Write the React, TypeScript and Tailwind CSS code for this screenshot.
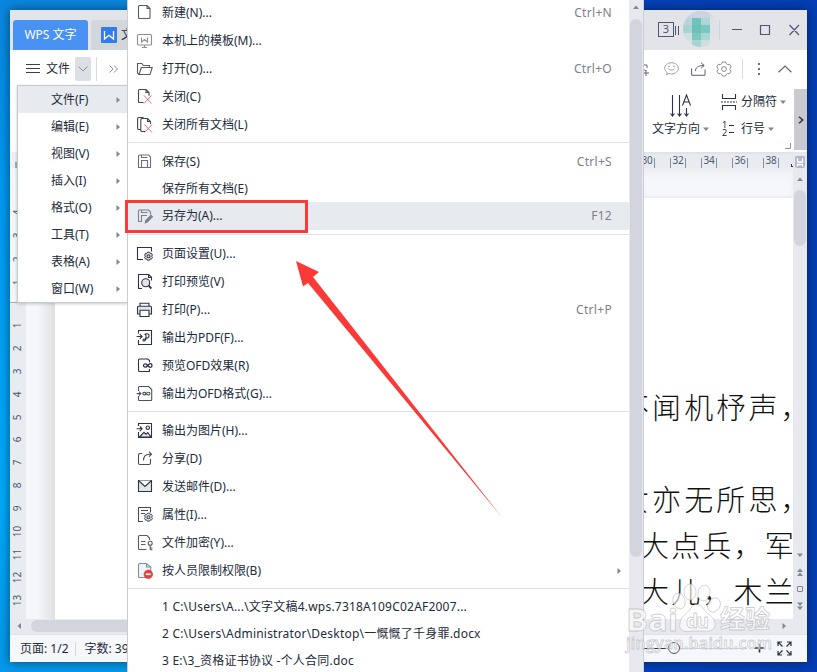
import type { ReactNode } from "react";

type MenuRow = {
  label: string;
  icon?: ReactNode;
  shortcut?: string;
  active?: boolean;
  submenu?: boolean;
  height?: string;
};

const INK = "#2b3444";

function Glyph({ children, color = INK }: { children: ReactNode; color?: string }) {
  return (
    <svg width="18" height="18" viewBox="0 0 18 18" fill="none" stroke={color} strokeWidth="1.1" className="shrink-0">
      {children}
    </svg>
  );
}

const gearSmall = (
  <>
    <path d="M11.5 7.2h2l.6 1.2 1.3-.1 1 1.7-.8 1.2.8 1.2-1 1.700-1.300-.1-.6 1.200h-2l-.6-1.200-1.300.1-1-1.700.8-1.200-.8-1.200 1-1.700 1.300.1z" fill="#e3e5e9" strokeWidth="1" />
    <circle cx="12.5" cy="11.2" r="1.500" />
  </>
);

const pageOutline = "M10.5 1.5h-7a1 1 0 0 0-1 1v12a1 1 0 0 0 1 1h10.2a1 1 0 0 0 1-1V5z";

const groups: MenuRow[][] = [
  [
    {
      label: "新建(N)...",
      shortcut: "Ctrl+N",
      icon: <Glyph color="#555b68"><path d="M11 1.500H3.500a1 1 0 0 0-1 1v11a1 1 0 0 0 1 1h9.500a1 1 0 0 0 1-1V4.500zM11 1.500v3h3" /></Glyph>,
    },
    {
      label: "本机上的模板(M)...",
      icon: (
        <Glyph color="#8b8f98">
          <rect x="1.5" y="2.5" width="14" height="10.5" rx="1" />
          <path d="M5.500 5.500v4.600l3-2.700 3 2.700V5.500M6 15.500h5M8.500 13v2.500" />
        </Glyph>
      ),
    },
    {
      label: "打开(O)...",
      shortcut: "Ctrl+O",
      icon: <Glyph color="#555b68"><path d="M3 14.500L1.500 13V3.500h4.300l1.600 2h6.100v2M3 14.500l2.300-7h10.900l-2.200 7z" /></Glyph>,
    },
    {
      label: "关闭(C)",
      icon: (
        <Glyph color="#3f4655">
          <path d="M7.500 14.500h-4a1 1 0 0 1-1-1V2.500a1 1 0 0 1 1-1h6.500l3 3v3.200M10 1.500v3h3" />
          <path d="M8 7.500l7.500 8M15.500 7.500L8 15.500" stroke="#d9736e" strokeWidth="1" />
        </Glyph>
      ),
    },
    {
      label: "关闭所有文档(L)",
      icon: (
        <Glyph color="#3f4655">
          <path d="M4.500 13.500H2.600a1 1 0 0 1-1-1v-10a1 1 0 0 1 1-1h5M9 15.500H5.800a1 1 0 0 1-1-1V3.500a1 1 0 0 1 1-1h5.700l3 3v2.500M11.500 2.500v3h3" />
          <path d="M8.500 8.500l7.500 8M16 8.500l-7.500 8" stroke="#d9736e" strokeWidth="1" />
        </Glyph>
      ),
    },
  ],
  [
    {
      label: "保存(S)",
      shortcut: "Ctrl+S",
      icon: <Glyph color="#6b707c"><path d="M2.500 14.500V3a1 1 0 0 1 1-1h9.100l1.900 2v10.500zM5.500 2v2.500h6M5.500 14.500V7.500h6v7" /></Glyph>,
    },
    { label: "保存所有文档(E)", height: "h-[26px]" },
    {
      label: "另存为(A)...",
      shortcut: "F12",
      active: true,
      icon: (
        <Glyph color="#7d828d">
          <path d="M6 14.500H2.500V4a1 1 0 0 1 1-1h9.100l1.900 2v2.500M5.500 3v2.500h6M5.500 14.500V8.500h5.500" />
          <path d="M9.300 15.800l.5-2.200L15 8.400l1.400 1.400-5.100 5.200z" fill="#777d89" />
        </Glyph>
      ),
    },
  ],
  [
    { label: "页面设置(U)...", icon: <Glyph><path d="M7 14.500H1.500v-12h14v4" />{gearSmall}</Glyph> },
    {
      label: "打印预览(V)",
      icon: (
        <Glyph>
          <path d="M6 15.500H2.500v-14h10.200l2.800 2.800v3.200M12.500 1.500v3h3" />
          <circle cx="9.700" cy="9.800" r="4" fill="#e3e5e9" />
          <path d="M12.600 12.700l2.800 2.800" strokeWidth="1.800" />
        </Glyph>
      ),
    },
    {
      label: "打印(P)...",
      shortcut: "Ctrl+P",
      icon: (
        <Glyph>
          <path d="M4 5V2.200h9V5" />
          <path d="M4 13H1.500V6.500a1.200 1.200 0 0 1 1.200-1.200h11.600a1.200 1.200 0 0 1 1.200 1.200V13H13" fill="#e3e5e9" />
          <path d="M4 9.200h9v6.300H4z" fill="#fff" />
        </Glyph>
      ),
    },
    {
      label: "输出为PDF(F)...",
      icon: (
        <Glyph>
          <path d="M2.500 4.500v-3h13v14h-13V11M.6 7.500h5M3.800 5.200l2.300 2.300-2.300 2.300" />
          <path d="M8.500 5.500c2.800-1.500 5-.5 4.500 1.600-.5 2-2.500 2.300-3.700 2.300M9.800 5.500c.5 3-.3 6-1.600 6.500-1.300.3-1.700-1.200-.4-1.700 1-.4 1.700-.4 2.700-.1" />
        </Glyph>
      ),
    },
    {
      label: "预览OFD效果(R)",
      icon: (
        <Glyph>
          <path d="M13.500 5.200V3.500L11.800 2H3.500a1 1 0 0 0-1 1v10.500a1 1 0 0 0 1 1h10V12" />
          <path d="M11.700 8.500c-1.700-2.400-4.200-1.800-4.200 0s2.500 2.400 4.200 0 4.300-2.400 4.300 0-2.500 2.400-4.300 0z" strokeWidth="1.300" />
        </Glyph>
      ),
    },
    {
      label: "输出为OFD格式(G)...",
      icon: (
        <Glyph color="#4b5261">
          <path d="M2.500 6V2.500a1 1 0 0 1 1-1h9.200l3 3v10.200a.8.8 0 0 1-.8.800H3.500a1 1 0 0 1-1-1V11M.6 8.600h4M3 6.700l1.900 1.900L3 10.500" />
          <path d="M10.300 8.600C9 6.800 6.800 7.100 6.800 8.600s2.200 1.900 3.500 0 3.600-1.900 3.600 0-2.300 1.800-3.600 0z" />
        </Glyph>
      ),
    },
  ],
  [
    {
      label: "输出为图片(H)...",
      icon: (
        <Glyph>
          <path d="M2.500 4v-2.500h13v14h-13V10M.6 6.800h5M3.800 4.500l2.300 2.300-2.300 2.300" />
          <path d="M3.500 15l4.500-4.700 2 1.900 1.800-1.600 3.200 4.400z" fill="#e3e5e9" />
          <circle cx="11.800" cy="5.700" r="1.700" />
        </Glyph>
      ),
    },
    {
      label: "分享(D)",
      icon: (
        <Glyph color="#454c5a">
          <path d="M6 3.500H4A1.500 1.500 0 0 0 2.500 5v8A1.500 1.500 0 0 0 4 14.500h9a1.500 1.500 0 0 0 1.500-1.500V9" />
          <path d="M7.500 10.500c0-3.800 2-6.300 5.500-6.300h2.300M13 1.700l2.500 2.500L13 6.700" />
        </Glyph>
      ),
    },
    {
      label: "发送邮件(D)...",
      icon: <Glyph><path d="M2.500 2.500h13v11h-13z" fill="#e3e5e9" /><path d="M2.500 2.500L9 8.500l6.500-6" fill="#fff" /></Glyph>,
    },
    {
      label: "属性(I)...",
      icon: <Glyph color="#454c5a"><path d="M7 15.500H2.500v-14h12v5M5 4.500h7M5 7.500h4" />{gearSmall}</Glyph>,
    },
    {
      label: "文件加密(Y)...",
      icon: (
        <Glyph color="#555b68">
          <path d="M10.500 15.500h-7a1 1 0 0 1-1-1v-12a1 1 0 0 1 1-1H11l2.500 2.500v2M5 7.500h4.500M5 10.500h4.500" />
          <circle cx="14.200" cy="9.300" r="2" />
          <path d="M14.200 11.300v4.400M14.200 14h2.200M14.200 15.700h2.200" />
        </Glyph>
      ),
    },
    {
      label: "按人员限制权限(B)",
      submenu: true,
      icon: (
        <Glyph color="#7d92a8">
          <path d={pageOutline} fill="#eef4f9" />
          <path d="M10.500 1.500V5h4" />
          <circle cx="12.300" cy="12.300" r="4.300" fill="#e0443c" stroke="#c9382f" strokeWidth=".6" />
          <path d="M9.800 12.300h5" stroke="#fff" strokeWidth="1.600" />
        </Glyph>
      ),
    },
  ],
  [
    { label: "1 C:\\Users\\A...\\文字文稿4.wps.7318A109C02AF2007...", height: "h-[27px]" },
    { label: "2 C:\\Users\\Administrator\\Desktop\\一慨慨了千身罪.docx", height: "h-[27px]" },
    { label: "3 E:\\3_资格证书协议 -个人合同.doc", height: "h-[27px]" },
  ],
];

const groupSpacing = ["", "mt-[3px] border-t pt-[5px]", "mt-1 border-t pt-[5px]", "mt-[3px] border-t pt-[5px]", "mt-[3px] border-t pt-1 tracking-[0.21px]"];

const fileMenu = ["文件(F)", "编辑(E)", "视图(V)", "插入(I)", "格式(O)", "工具(T)", "表格(A)", "窗口(W)"];

function Tri({ dir, className = "" }: { dir: "up" | "down" | "left" | "right"; className?: string }) {
  const d = {
    up: "M0 5L3 1.500 6 5z",
    down: "M0 1.500L3 5 6 1.500z",
    left: "M5 0L1.500 3 5 6z",
    right: "M1.500 0L5 3 1.500 6z",
  }[dir];
  return (
    <svg width="6" height="6" viewBox="0 0 6 6" fill="#7d8799" className={`shrink-0 ${className}`}>
      <path d={d} />
    </svg>
  );
}

function TitleBar() {
  return (
    <div className="flex h-10 items-end bg-[#e2e4e8] pl-[3px]">
      <div className="flex h-[30px] w-[75px] items-center justify-center rounded-t-[3px] bg-[#4a91f4] text-white">WPS 文字</div>
      <div className="ml-[3px] flex h-[30px] w-[150px] items-center rounded-t-[3px] bg-[#d3d6db] pl-[10px]">
        <svg width="16" height="16" viewBox="0 0 16 16">
          <rect width="16" height="16" rx="1" fill="#2f7cec" />
          <path d="M3.500 4v8L8 8.300l4.500 3.700V4" fill="none" stroke="#fff" strokeWidth="1.300" />
        </svg>
        <span className="ml-1">文字文稿4</span>
      </div>
      <div className="ml-auto flex h-full items-center pr-[7px] text-[#4a5875]">
        <span className="-mt-0.5 flex h-[15px] w-4 items-center justify-center border border-[#4a5875] text-[11px]">3</span>
        <span className="ml-px h-[9px] w-1 border-x border-[#4a5875]" />
        <Avatar />
        <span className="h-5 w-px bg-[#cfd2d8]" />
        <svg width="68" height="12" viewBox="0 0 68 12" fill="none" stroke="#4a5875" strokeWidth="1.200" className="ml-3">
          <path d="M0 5.500h10M28.500 1.500h9v9h-9zM57.500 1l9.500 10M67 1l-9.500 10" />
        </svg>
      </div>
    </div>
  );
}

function Avatar() {
  const cells = [
    "#cbd2e1", "#cbd2e1", "#cbd2e1", "#d8dce3",
    "#b5d6da", "#6fc3bb", "#abd8d6", "#dee1e5",
    "#a4d5d3", "#6cc0b8", "#7cc6c0", "#dde1e5",
    "#d0dfe2", "#7cc7bf", "#a8d6d1", "#dfe2e6",
    "#d9e1e4", "#a4d5d0", "#cfdfe1", "#e0e4e7",
  ];
  return (
    <span className="-mt-0.5 ml-1 grid h-9 w-9 grid-cols-4 grid-rows-5 overflow-hidden rounded-full">
      {cells.map((c, i) => (
        <span key={i} style={{ backgroundColor: c }} />
      ))}
    </span>
  );
}

function QuickBar() {
  return (
    <div className="flex h-[35px] items-center pb-px pl-4 pr-[15px]">
      <svg width="14" height="11" viewBox="0 0 14 11" stroke="#3a4150" strokeWidth="1" className="mt-[3px]">
        <path d="M0 1.500h14M0 5.500h14M0 9.500h14" />
      </svg>
      <span className="ml-[6px] mt-1">文件</span>
      <span className="ml-[5px] mt-1 flex h-6 w-4 items-center justify-center rounded-[2px] bg-[#dcdfe4]">
        <svg width="10" height="6" viewBox="0 0 10 6" fill="none" stroke="#8b9099">
          <path d="M.5.500L5 5 9.500.500" />
        </svg>
      </span>
      <span className="ml-[5px] mt-1 h-6 w-px bg-[#d9dce1]" />
      <svg width="9" height="8" viewBox="0 0 9 8" fill="none" stroke="#8b9099" className="ml-3 mt-[3px]">
        <path d="M.5.500L4 4 .5 7.500M5 .500L8.500 4 5 7.500" />
      </svg>
      <div className="ml-auto flex items-center pt-1">
        <svg width="16" height="16" viewBox="0 0 16 16" fill="none" stroke="#5f6775">
          <circle cx="6" cy="5" r="3" />
          <path d="M1 14c0-6 8-7 11-4M9 12h6M12 9v6M9 4h4v3" />
        </svg>
        <svg width="15" height="14" viewBox="0 0 15 14" fill="none" stroke="#9a9da4" className="ml-[14px]">
          <path d="M7.500.700c3.800 0 6.800 2.500 6.800 5.600s-3 5.700-6.800 5.700c-1 0-1.800-.2-2.600-.5l-2.300 1.200.5-2.300C1.600 9.300.700 7.900.700 6.300.700 3.200 3.700.700 7.500.700z" />
          <path d="M4.200 6.500c1 2 5.500 2 6.500 0" />
          <path d="M5 3.800v1.200M10 3.800v1.200" strokeWidth="1.500" />
        </svg>
        <svg width="15" height="14" viewBox="0 0 15 14" fill="none" stroke="#5a6272" className="ml-3">
          <path d="M.600 6.500v6.800h13.400V7.500M4.500 9c0-3.500 2.500-5.500 8.500-5.500M10 .700l3.200 2.800L10 6.300" />
        </svg>
        <svg width="16" height="16" viewBox="0 0 16 16" fill="none" stroke="#858a94" className="ml-[10px]">
          <path d="M6.500 1h3l.8 1.700 1.400.8 1.900-.2 1.500 2.600L14 7.500v1l1.100 1.600-1.500 2.600-1.900-.2-1.400.8-.8 1.700h-3l-.8-1.700-1.400-.8-1.900.2-1.500-2.600L2 8.500v-1L.900 5.900l1.500-2.600 1.900.2 1.400-.8z" />
          <circle cx="8" cy="8" r="2.400" />
        </svg>
        <span className="ml-[10px] h-5 w-px bg-[#d9dce1]" />
        <svg width="2" height="12" viewBox="0 0 2 12" fill="#6a7180" className="ml-[15px]">
          <path d="M0 0h2v2H0zM0 5h2v2H0zM0 10h2v2H0z" />
        </svg>
        <svg width="14" height="8" viewBox="0 0 14 8" fill="none" stroke="#5f6775" strokeWidth="1.200" className="ml-[18px]">
          <path d="M.600 7.300L7 1l6.400 6.300" />
        </svg>
      </div>
    </div>
  );
}

function Ribbon() {
  return (
    <div className="flex h-[67px] justify-end whitespace-nowrap pt-1">
      <div className="flex w-[58px] flex-col items-center">
        <svg width="24" height="26" viewBox="0 0 24 26" fill="none" stroke={INK} strokeWidth="1.100" className="ml-px mt-[5px]">
          <path d="M3.500 1v21M1.500 19.500l2 2.500 2-2.500M10.500 1v21M8.500 19.500l2 2.500 2-2.500M17.500 14v8M15.500 19.500l2 2.500 2-2.500" />
          <path d="M13.500 11.500l4-10.500 4 10.500M15 8h5" />
        </svg>
        <div className="ml-px flex items-center gap-[3px]">
          文字方向 <Tri dir="down" />
        </div>
      </div>
      <div className="ml-3 flex w-[73px] flex-col">
        <div className="flex h-[26px] items-center">
          <svg width="16" height="16" viewBox="0 0 16 16" fill="none" stroke={INK} strokeWidth="1.100">
            <path d="M1.500 0v4.500h13V0M1.500 16v-4.500h13V16" />
            <path d="M0 8h16" strokeDasharray="2 1" />
          </svg>
          <span className="ml-1">分隔符</span>
          <Tri dir="down" className="ml-[3px]" />
        </div>
        <div className="flex h-[27px] items-center">
          <div className="flex w-4 items-center gap-[2px] pl-px">
            <div className="flex flex-col text-[9px] leading-[8px]">
              <span>1</span>
              <span>2</span>
            </div>
            <div className="flex flex-col gap-[6px]">
              <span className="h-px w-[5px] bg-[#2b3444]" />
              <span className="h-px w-[5px] bg-[#2b3444]" />
            </div>
          </div>
          <span className="ml-1">行号</span>
          <Tri dir="down" className="ml-[3px]" />
        </div>
        <svg width="6" height="6" viewBox="0 0 6 6" fill="none" stroke="#8b9099" className="ml-[64px] mt-px">
          <path d="M5.500 0v5.500H0" />
        </svg>
      </div>
      <div className="flex h-[61px] w-[13px] items-center justify-center bg-[#c8cad0]">
        <svg width="6" height="8" viewBox="0 0 6 8" fill="none" stroke={INK} strokeWidth="1.500">
          <path d="M1 .700L4.700 4 1 7.300" />
        </svg>
      </div>
    </div>
  );
}

function TopRuler() {
  return (
    <div className="flex h-4 w-full bg-[#e8ebf0] shadow-[inset_0_2px_2px_#dfe2e7]">
      <div className="w-[45px] shrink-0 bg-[#eef0f4] pl-[5px] pt-[10px]">
        <div className="h-[6px] w-1 border-b-2 border-l-2 border-[#a3a9b6]" />
      </div>
      <div className="ml-auto flex text-[10px] leading-4 tracking-[-0.3px] text-[#4e5a70]">
        {[30, 32, 34, 36, 38].map((n) => (
          <div key={n} className="flex w-[31px]">
            <span className="mt-1.5 h-[10px] w-px bg-[#8791a5]" />
            <span className="w-[14px] text-center">{n}</span>
            <span className="mt-1.5 h-[10px] w-px bg-[#8791a5]" />
          </div>
        ))}
        <span className="-ml-[3px] mt-3 h-[3px] w-[2px] border-b border-l border-[#2b3444]" />
      </div>
    </div>
  );
}

function LeftRuler() {
  return (
    <div className="flex w-4 shrink-0 flex-col bg-[#e8ebf0] text-[10px] text-[#4e5a70]">
      <div className="flex h-[135px] flex-col border-b border-[#a9afbb] bg-[#f3f5f8] pt-[33px]">
        {[4, 3, 2, 1].map((n) => (
          <div key={n} className="flex h-[23.300px] items-center justify-center">
            <span className="-rotate-90">{n}</span>
          </div>
        ))}
      </div>
      <div className="overflow-hidden pt-[11px]">
        {[1, 2, 3, 4, 5, 6, 7, 8, 9, 10, 11, 12, 13].map((n) => (
          <div key={n} className="flex h-[22.900px] items-center justify-center">
            <span className="-rotate-90">{n}</span>
          </div>
        ))}
      </div>
    </div>
  );
}

function VerticalScroll() {
  return (
    <div className="flex w-[14px] shrink-0 flex-col items-center bg-[#e8e9ef]">
      <svg width="10" height="12" viewBox="0 0 10 12" className="mt-[4px] shrink-0">
        <rect width="10" height="12" rx="2" fill="#aeb8cc" />
        <path d="M2.500 2v4h5V2M2.500 10.500V8.500h5v2" fill="none" stroke="#fff" strokeWidth="1.300" />
      </svg>
      <Tri dir="up" className="mt-2" />
      <div className="mt-2 h-[56px] w-3 rounded-full bg-[#d2d5de]" />
      <div className="mb-[8px] mt-auto flex flex-col items-center gap-[9px]">
        <Tri dir="down" />
        <div><Tri dir="up" /><Tri dir="up" className="-mt-[2px]" /></div>
        <span className="h-[6px] w-[6px] rounded-[1px] border border-[#7d8799]" />
        <div><Tri dir="down" /><Tri dir="down" className="-mt-[2px]" /></div>
      </div>
    </div>
  );
}

function Page() {
  return (
    <div className="flex min-w-0 flex-1 flex-col overflow-hidden pt-[30px] shadow-[inset_0_6px_6px_#eceef2]">
      <div className="flex-1 overflow-hidden whitespace-nowrap bg-white pt-[185px] font-['Noto_Sans_CJK_SC',sans-serif] text-[29px] font-light leading-[46px] text-[#111] shadow-[0_0_4px_#d8dade]">
        <div className="pl-[565px] tracking-[3.100px]">不闻机杼声，</div>
        <div className="mt-[46px] pl-[565px] tracking-[3.100px]">女亦无所思，</div>
        <div className="pl-[585px] tracking-[2.200px]">大点兵，军书</div>
        <div className="pl-[585px] tracking-[2.200px]">大儿，木兰无</div>
      </div>
    </div>
  );
}

function StatusBar() {
  return (
    <div className="flex h-7 items-center border-t border-[#e1e3e8] bg-[#f5f7fa] pl-[10px]">
      <span>页面: 1/2</span>
      <span className="ml-[6px] h-[14px] w-px bg-[#d5d8de]" />
      <span className="ml-[9px]">字数: 3902</span>
      <svg width="155" height="16" viewBox="0 0 155 16" fill="none" stroke={INK} className="mb-0.5 ml-auto mr-[15px]">
        <path d="M0 8.500h31" strokeWidth="1" />
        <path d="M43 8.500h67" stroke="#d0d3d9" />
        <circle cx="37" cy="8" r="5.500" fill="#f5f7fa" stroke="#555" />
        <path d="M117.500 8h10M122.500 3.500v9" strokeWidth="1.600" />
        <path d="M145 2h-4v4M141 2l4.500 4.500M150 2h4v4M154 2l-4.500 4.500M145 15h-4v-4M141 15l4.500-4.500M150 15h4v-4M154 15l-4.500-4.500" strokeWidth="1.200" />
      </svg>
    </div>
  );
}

function FileMenu() {
  return (
    <div className="absolute left-[17px] top-[85px] w-[120px] border border-[#c6c9cf] bg-white shadow-[0_1px_3px_#0003]">
      {fileMenu.map((label, i) => (
        <div key={label} className={`flex h-[27px] items-center pl-[33px] pr-[15px] ${i === 0 ? "bg-[#e7eaef]" : ""}`}>
          {label}
          <Tri dir="right" className="ml-auto" />
        </div>
      ))}
    </div>
  );
}

function MainMenu() {
  return (
    <div className="absolute left-[127px] top-0 flex h-full w-[517px] overflow-hidden border-x border-[#c9ccd2] bg-white">
      <div className="-mt-px min-w-0 flex-1">
        {groups.map((rows, g) => (
          <div key={g} className={`border-[#dfe1e8] ${groupSpacing[g]}`}>
            {rows.map((row) => (
              <div
                key={row.label}
                className={`flex items-center pl-2 ${row.height ?? "h-7"} ${row.active ? "bg-[#e7eaef]" : ""}`}
              >
                <span className="w-[26px] shrink-0">{row.icon}</span>
                <span className="whitespace-pre">{row.label}</span>
                {row.shortcut && <span className="ml-auto pr-[17px] tracking-[0.3px] text-[#7c818b]">{row.shortcut}</span>}
                {row.submenu && <Tri dir="right" className="ml-auto mr-[7px]" />}
              </div>
            ))}
          </div>
        ))}
      </div>
      <div className="flex w-[14px] flex-col items-center bg-[#e8e9ef] pt-1">
        <Tri dir="up" />
        <div className="mt-[9px] h-[538px] w-3 rounded-full bg-[#d2d5de]" />
      </div>
    </div>
  );
}

function Annotation() {
  return (
    <>
      <div className="absolute left-[125px] top-[200px] h-[33px] w-[183px] border-[3px] border-[#fb3a38]" />
      <svg width="210" height="262" viewBox="0 0 210 262" className="absolute left-[294px] top-[258px]">
        <path d="M2 3l23 11-6 5L208.500 260 14 25l-5 3.500z" fill="#fb3a38" />
      </svg>
    </>
  );
}

function Watermark() {
  return (
    <svg width="160" height="80" viewBox="0 0 160 80" className="absolute left-[622px] top-[580px]" fill="#fff" fillOpacity=".65" stroke="#a9abb0" strokeOpacity=".6" strokeWidth=".8">
      <ellipse cx="57" cy="21" rx="6" ry="8" transform="rotate(-18 57 21)" />
      <ellipse cx="68" cy="12" rx="6" ry="8" />
      <ellipse cx="82" cy="13" rx="6" ry="8" transform="rotate(10 82 13)" />
      <ellipse cx="92" cy="25" rx="6" ry="7.500" transform="rotate(30 92 25)" />
      <path d="M58 43c1-7 7-9 11-15 3-5 9-5 12 0 4 7 11 8 12 15s-5 9-12 8H70c-8 2-14-1-12-8z" />
      <text x="4" y="51" fontSize="31" fontWeight="700" fontFamily="Open Sans" textLength="52" lengthAdjust="spacingAndGlyphs">Bai</text>
      <text x="64" y="48" fontSize="19" fontWeight="700" fontFamily="Open Sans" textLength="23">du</text>
      <text x="98" y="48" fontSize="25" fontWeight="700" fontFamily="Noto Sans CJK SC" textLength="50">经验</text>
      <text x="4" y="69" fontSize="16" fontWeight="600" fontFamily="Open Sans" textLength="146">jingyan.baidu.com</text>
    </svg>
  );
}

export default function App() {
  return (
    <div className="relative h-[672px] w-[817px] overflow-hidden bg-[linear-gradient(90deg,#0848c4,#043eb5)] font-['Noto_Sans','Noto_Sans_CJK_SC',sans-serif] text-[12px] text-[#222b3a]">
      <div className="h-full bg-[linear-gradient(180deg,#0a86de,#009af2_30%,#00aafa_75%,#0597ea)] bg-[length:128px_100%] bg-no-repeat p-[10px]">
        <div className="flex h-[652px] w-[797px] flex-col overflow-hidden bg-white shadow-[0_0_10px_#0008]">
          <TitleBar />
          <QuickBar />
          <Ribbon />
          <div className="flex h-[467px] bg-[#f5f7fa]">
            <div className="flex min-w-0 flex-1 flex-col">
              <TopRuler />
              <div className="flex min-h-0 flex-1">
                <LeftRuler />
                <div className="w-[29px] shrink-0 bg-[linear-gradient(90deg,#f5f7fa_40%,#dedfe1)]" />
                <Page />
              </div>
            </div>
            <VerticalScroll />
          </div>
          <div className="flex h-[14px] items-center bg-[#e8e9ef] pl-[6px] pr-[20px]">
            <Tri dir="left" />
            <span className="ml-[9px] h-3 w-[600px] rounded-full bg-[#d2d5de]" />
            <Tri dir="right" className="ml-auto" />
          </div>
          <div className="h-px bg-[#e8e9ef]" />
          <StatusBar />
        </div>
      </div>
      <FileMenu />
      <MainMenu />
      <Annotation />
      <Watermark />
    </div>
  );
}
